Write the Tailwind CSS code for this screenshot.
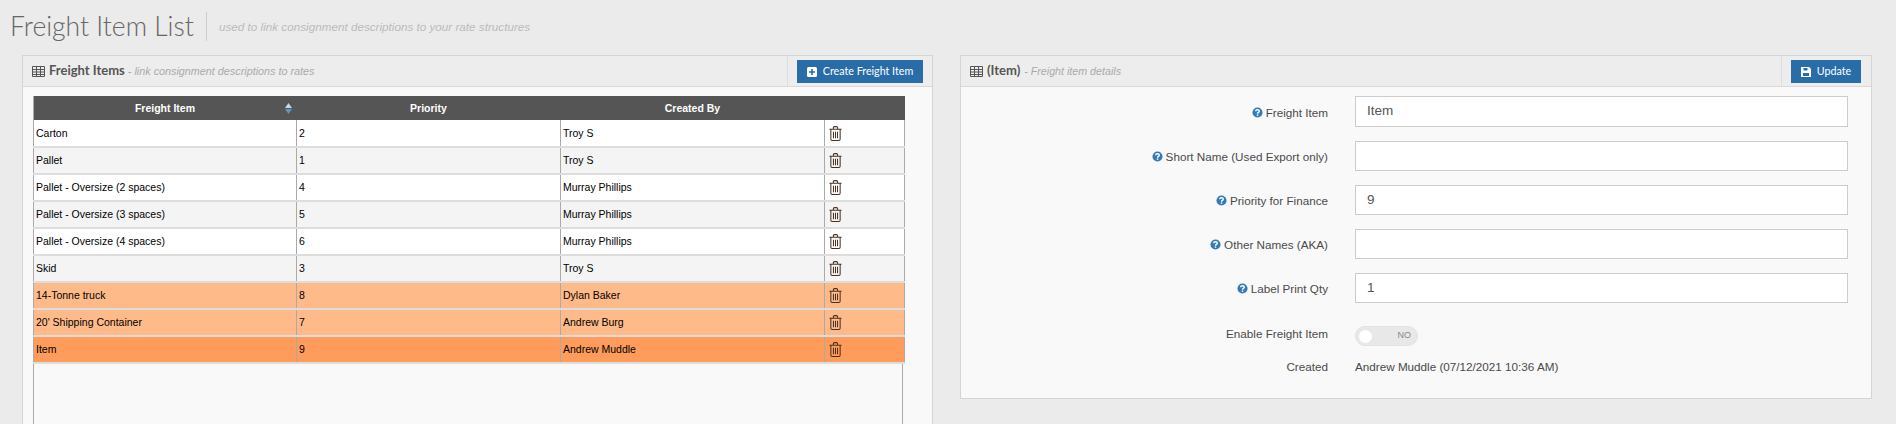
<!DOCTYPE html>
<html lang="en">
<head>
    <meta charset="UTF-8">
    <title>Freight Item List</title>
    <script src="https://cdn.jsdelivr.net/npm/@tailwindcss/browser@4"></script>
</head>
<body class="bg-[#ebebeb] h-[424px] overflow-hidden font-['Liberation_Sans',sans-serif] text-[#333]">
    <svg class="hidden">
        <symbol id="grid" viewBox="0 0 13 12"><path fill="none" stroke="currentColor" d="M.5 1.5h12v10H.5zM.5 4.5h12M.5 7h12M.5 9.5h12M4.5 2v9M8.5 2v9"/></symbol>
        <symbol id="trash" viewBox="0 0 14 16"><path fill="none" stroke="currentColor" stroke-width="1.1" d="M.5 3.5h13M2 3.5v10.7q0 1.3 1.3 1.3h7.4q1.3 0 1.3-1.3V3.5M4.7 3.2V1.8Q4.7.6 6 .6h2q1.3 0 1.3 1.2v1.4M4.8 6v7M7 6v7M9.2 6v7"/></symbol>
        <symbol id="help" viewBox="0 0 12 12"><circle cx="6" cy="6" r="5.5" fill="#337ab7"/><path fill="none" stroke="#fff" stroke-width="1.5" d="M4 4.6Q4 3 6 3t2 1.6Q8 5.5 6.9 6 6 6.4 6 7.4"/><rect x="5.2" y="8.1" width="1.6" height="1.5" fill="#fff"/></symbol>
    </svg>

    <!-- Page title -->
    <div class="h-[55px] pl-[10px] pt-[12px] flex items-start">
        <h1 class="font-['Lato',sans-serif] font-light text-[26.5px] leading-[29px] text-[#666] pr-[10px] border-r border-[#ccc] h-[29px] w-[197px] whitespace-nowrap">Freight Item List</h1>
        <span class="italic text-[11.7px] leading-[29px] text-[#bbb] ml-[12px]">used to link consignment descriptions to your rate structures</span>
    </div>

    <div class="flex pl-[22px] gap-[27px] items-start">
        <!-- Freight items panel -->
        <section class="w-[911px] h-[369px] border border-[#d5d5d5] border-b-0 bg-[#f9f9f9] shrink-0">
            <div class="h-[31px] bg-[#ededed] border-b border-[#d9d9d9] flex items-center">
                <div class="flex-1 pl-[9px] flex items-center">
                    <svg class="w-[13px] h-[12px] text-[#555] mr-[4px]"><use href="#grid"/></svg>
                    <span class="font-['Lato',sans-serif] font-bold text-[13px] text-[#555]">Freight Items</span>
                    <span class="italic text-[10.8px] text-[#aaa] ml-[3px]">- link consignment descriptions to rates</span>
                </div>
                <div class="w-[145px] h-full border-l border-[#ddd] pl-[9px] flex items-center">
                    <button class="w-[126px] h-[23px] mt-px bg-[#286da8] border border-[#2e6da4] text-white text-[10.7px] flex items-center justify-center gap-[6px] font-['Lato',sans-serif]">
                        <svg class="w-[10px] h-[10px]" viewBox="0 0 10 10"><rect width="10" height="10" rx="1.5" fill="#fff"/><path d="M5 2v6M2 5h6" stroke="#286da8" stroke-width="1.6"/></svg>
                        Create Freight Item
                    </button>
                </div>
            </div>
            <div class="ml-[10px] mt-[9px] w-[870px] h-[328px] border-x border-[#aaa]">
                <div class="w-[871px] -ml-px">
                    <table class="w-[871px] table-fixed border-collapse text-[10.5px] text-black">
                        <colgroup><col class="w-[263px]"><col class="w-[264px]"><col class="w-[264px]"><col class="w-[80px]"></colgroup>
                        <thead>
                            <tr class="h-[24px] bg-[#555] text-white text-[10.5px] font-bold">
                                <th class="relative font-bold pt-px">Freight Item
                                    <svg class="absolute right-[5px] top-[7px] w-[7px] h-[11px]" viewBox="0 0 7 11"><path d="M3.5 0 7 5H0z" fill="#c5d9ea"/><path d="M3.5 11 0 6h7z" fill="#5b95c6"/></svg>
                                </th>
                                <th class="font-bold pt-px">Priority</th>
                                <th class="font-bold pt-px">Created By</th>
                                <th></th>
                            </tr>
                        </thead>
                        <tbody>
                            <tr class="h-[27px] bg-white">
                                <td class="pl-[2px] pt-px border-x border-[#aaa] border-b-2 border-b-[#ddd]">Carton</td>
                                <td class="pl-[2px] pt-px border-x border-[#aaa] border-b-2 border-b-[#ddd]">2</td>
                                <td class="pl-[2px] pt-px border-x border-[#aaa] border-b-2 border-b-[#ddd]">Troy S</td>
                                <td class="pl-[4px] border-x border-[#aaa] border-b-2 border-b-[#ddd]"><svg class="w-[13px] h-[15px] text-[#4a3020]"><use href="#trash"/></svg></td>
                            </tr>
                            <tr class="h-[27px] bg-[#f4f4f4]">
                                <td class="pl-[2px] pt-px border-x border-[#aaa] border-b-2 border-b-[#ddd]">Pallet</td>
                                <td class="pl-[2px] pt-px border-x border-[#aaa] border-b-2 border-b-[#ddd]">1</td>
                                <td class="pl-[2px] pt-px border-x border-[#aaa] border-b-2 border-b-[#ddd]">Troy S</td>
                                <td class="pl-[4px] border-x border-[#aaa] border-b-2 border-b-[#ddd]"><svg class="w-[13px] h-[15px] text-[#4a3020]"><use href="#trash"/></svg></td>
                            </tr>
                            <tr class="h-[27px] bg-white">
                                <td class="pl-[2px] pt-px border-x border-[#aaa] border-b-2 border-b-[#ddd]">Pallet - Oversize (2 spaces)</td>
                                <td class="pl-[2px] pt-px border-x border-[#aaa] border-b-2 border-b-[#ddd]">4</td>
                                <td class="pl-[2px] pt-px border-x border-[#aaa] border-b-2 border-b-[#ddd]">Murray Phillips</td>
                                <td class="pl-[4px] border-x border-[#aaa] border-b-2 border-b-[#ddd]"><svg class="w-[13px] h-[15px] text-[#4a3020]"><use href="#trash"/></svg></td>
                            </tr>
                            <tr class="h-[27px] bg-[#f4f4f4]">
                                <td class="pl-[2px] pt-px border-x border-[#aaa] border-b-2 border-b-[#ddd]">Pallet - Oversize (3 spaces)</td>
                                <td class="pl-[2px] pt-px border-x border-[#aaa] border-b-2 border-b-[#ddd]">5</td>
                                <td class="pl-[2px] pt-px border-x border-[#aaa] border-b-2 border-b-[#ddd]">Murray Phillips</td>
                                <td class="pl-[4px] border-x border-[#aaa] border-b-2 border-b-[#ddd]"><svg class="w-[13px] h-[15px] text-[#4a3020]"><use href="#trash"/></svg></td>
                            </tr>
                            <tr class="h-[27px] bg-white">
                                <td class="pl-[2px] pt-px border-x border-[#aaa] border-b-2 border-b-[#ddd]">Pallet - Oversize (4 spaces)</td>
                                <td class="pl-[2px] pt-px border-x border-[#aaa] border-b-2 border-b-[#ddd]">6</td>
                                <td class="pl-[2px] pt-px border-x border-[#aaa] border-b-2 border-b-[#ddd]">Murray Phillips</td>
                                <td class="pl-[4px] border-x border-[#aaa] border-b-2 border-b-[#ddd]"><svg class="w-[13px] h-[15px] text-[#4a3020]"><use href="#trash"/></svg></td>
                            </tr>
                            <tr class="h-[27px] bg-[#f4f4f4]">
                                <td class="pl-[2px] pt-px border-x border-[#aaa] border-b-2 border-b-[#ddd]">Skid</td>
                                <td class="pl-[2px] pt-px border-x border-[#aaa] border-b-2 border-b-[#ddd]">3</td>
                                <td class="pl-[2px] pt-px border-x border-[#aaa] border-b-2 border-b-[#ddd]">Troy S</td>
                                <td class="pl-[4px] border-x border-[#aaa] border-b-2 border-b-[#ddd]"><svg class="w-[13px] h-[15px] text-[#4a3020]"><use href="#trash"/></svg></td>
                            </tr>
                            <tr class="h-[27px] bg-[#ffba8a]">
                                <td class="pl-[2px] pt-px border-x border-[#aaa] border-b-2 border-b-[#ddd]">14-Tonne truck</td>
                                <td class="pl-[2px] pt-px border-x border-[#aaa] border-b-2 border-b-[#ddd]">8</td>
                                <td class="pl-[2px] pt-px border-x border-[#aaa] border-b-2 border-b-[#ddd]">Dylan Baker</td>
                                <td class="pl-[4px] border-x border-[#aaa] border-b-2 border-b-[#ddd]"><svg class="w-[13px] h-[15px] text-[#4a3020]"><use href="#trash"/></svg></td>
                            </tr>
                            <tr class="h-[27px] bg-[#ffba8a]">
                                <td class="pl-[2px] pt-px border-x border-[#aaa] border-b-2 border-b-[#ddd]">20' Shipping Container</td>
                                <td class="pl-[2px] pt-px border-x border-[#aaa] border-b-2 border-b-[#ddd]">7</td>
                                <td class="pl-[2px] pt-px border-x border-[#aaa] border-b-2 border-b-[#ddd]">Andrew Burg</td>
                                <td class="pl-[4px] border-x border-[#aaa] border-b-2 border-b-[#ddd]"><svg class="w-[13px] h-[15px] text-[#4a3020]"><use href="#trash"/></svg></td>
                            </tr>
                            <tr class="h-[27px] bg-[#ff9c5b]">
                                <td class="pl-[2px] pt-px border-x border-[#aaa] border-b-2 border-b-[#ddd]">Item</td>
                                <td class="pl-[2px] pt-px border-x border-[#aaa] border-b-2 border-b-[#ddd]">9</td>
                                <td class="pl-[2px] pt-px border-x border-[#aaa] border-b-2 border-b-[#ddd]">Andrew Muddle</td>
                                <td class="pl-[4px] border-x border-[#aaa] border-b-2 border-b-[#ddd]"><svg class="w-[13px] h-[15px] text-[#4a3020]"><use href="#trash"/></svg></td>
                            </tr>
                        </tbody>
                    </table>
                </div>
            </div>
        </section>

        <!-- Item details panel -->
        <section class="w-[912px] h-[344px] border border-[#d5d5d5] bg-[#f9f9f9] shrink-0">
            <div class="h-[31px] bg-[#ededed] border-b border-[#d9d9d9] flex items-center">
                <div class="flex-1 pl-[9px] flex items-center">
                    <svg class="w-[13px] h-[12px] text-[#555] mr-[4px]"><use href="#grid"/></svg>
                    <span class="font-['Lato',sans-serif] font-bold text-[13px] text-[#555]">(Item)</span>
                    <span class="italic text-[10.7px] text-[#aaa] ml-[4px]">- Freight item details</span>
                </div>
                <div class="w-[90px] h-full border-l border-[#ddd] pl-[9px] flex items-center">
                    <button class="w-[70px] h-[23px] mt-px bg-[#286da8] border border-[#2e6da4] text-white text-[10.7px] flex items-center justify-center gap-[6px] font-['Lato',sans-serif]">
                        <svg class="w-[10px] h-[10px]" viewBox="0 0 10 10"><path fill="#fff" d="M0 0h8l2 2v8H0z"/><path fill="#286da8" d="M2.5 1h4v2.5h-4zM2 6h6v3H2z"/></svg>
                        Update
                    </button>
                </div>
            </div>
            <div class="pt-[9px] pr-[23px] grid grid-cols-[1fr_493px] gap-x-[27px] gap-y-[14px] text-[11.7px] text-[#4a4a4a] items-center">
                <label class="flex items-center justify-end gap-[3px] pt-[2px] whitespace-nowrap"><svg class="w-[11px] h-[11px] shrink-0"><use href="#help"/></svg>Freight Item</label>
                <input class="h-[31px] w-[493px] bg-white border border-[#ccc] px-[11px] pb-[2px] text-[13.5px] text-[#555]" value="Item">
                <label class="flex items-center justify-end gap-[3px] pt-[2px] whitespace-nowrap"><svg class="w-[11px] h-[11px] shrink-0"><use href="#help"/></svg>Short Name (Used Export only)</label>
                <input class="h-[30px] w-[493px] bg-white border border-[#ccc] px-[11px] pb-[2px] text-[13.5px] text-[#555]">
                <label class="flex items-center justify-end gap-[3px] pt-[2px] whitespace-nowrap"><svg class="w-[11px] h-[11px] shrink-0"><use href="#help"/></svg>Priority for Finance</label>
                <input class="h-[30px] w-[493px] bg-white border border-[#ccc] px-[11px] pb-[2px] text-[13.5px] text-[#555]" value="9">
                <label class="flex items-center justify-end gap-[3px] pt-[2px] whitespace-nowrap"><svg class="w-[11px] h-[11px] shrink-0"><use href="#help"/></svg>Other Names (AKA)</label>
                <input class="h-[30px] w-[493px] bg-white border border-[#ccc] px-[11px] pb-[2px] text-[13.5px] text-[#555]">
                <label class="flex items-center justify-end gap-[3px] pt-[2px] whitespace-nowrap"><svg class="w-[11px] h-[11px] shrink-0"><use href="#help"/></svg>Label Print Qty</label>
                <input class="h-[30px] w-[493px] bg-white border border-[#ccc] px-[11px] pb-[2px] text-[13.5px] text-[#555]" value="1">
                <span class="text-right self-start whitespace-nowrap mt-[8px]">Enable Freight Item</span>
                <div class="h-[20px] w-[63px] mt-[9px] rounded-full bg-[#e8e8e8] border border-[#e2e2e2] flex items-center justify-between pl-[3px] pr-[6px] text-[9px] text-[#888]">
                    <span class="w-[13px] h-[13px] rounded-full bg-white"></span>NO
                </div>
                <span class="text-right -mt-[2px]">Created</span>
                <span class="-mt-[2px]">Andrew Muddle (07/12/2021 10:36 AM)</span>
            </div>
        </section>
    </div>
</body>
</html>
